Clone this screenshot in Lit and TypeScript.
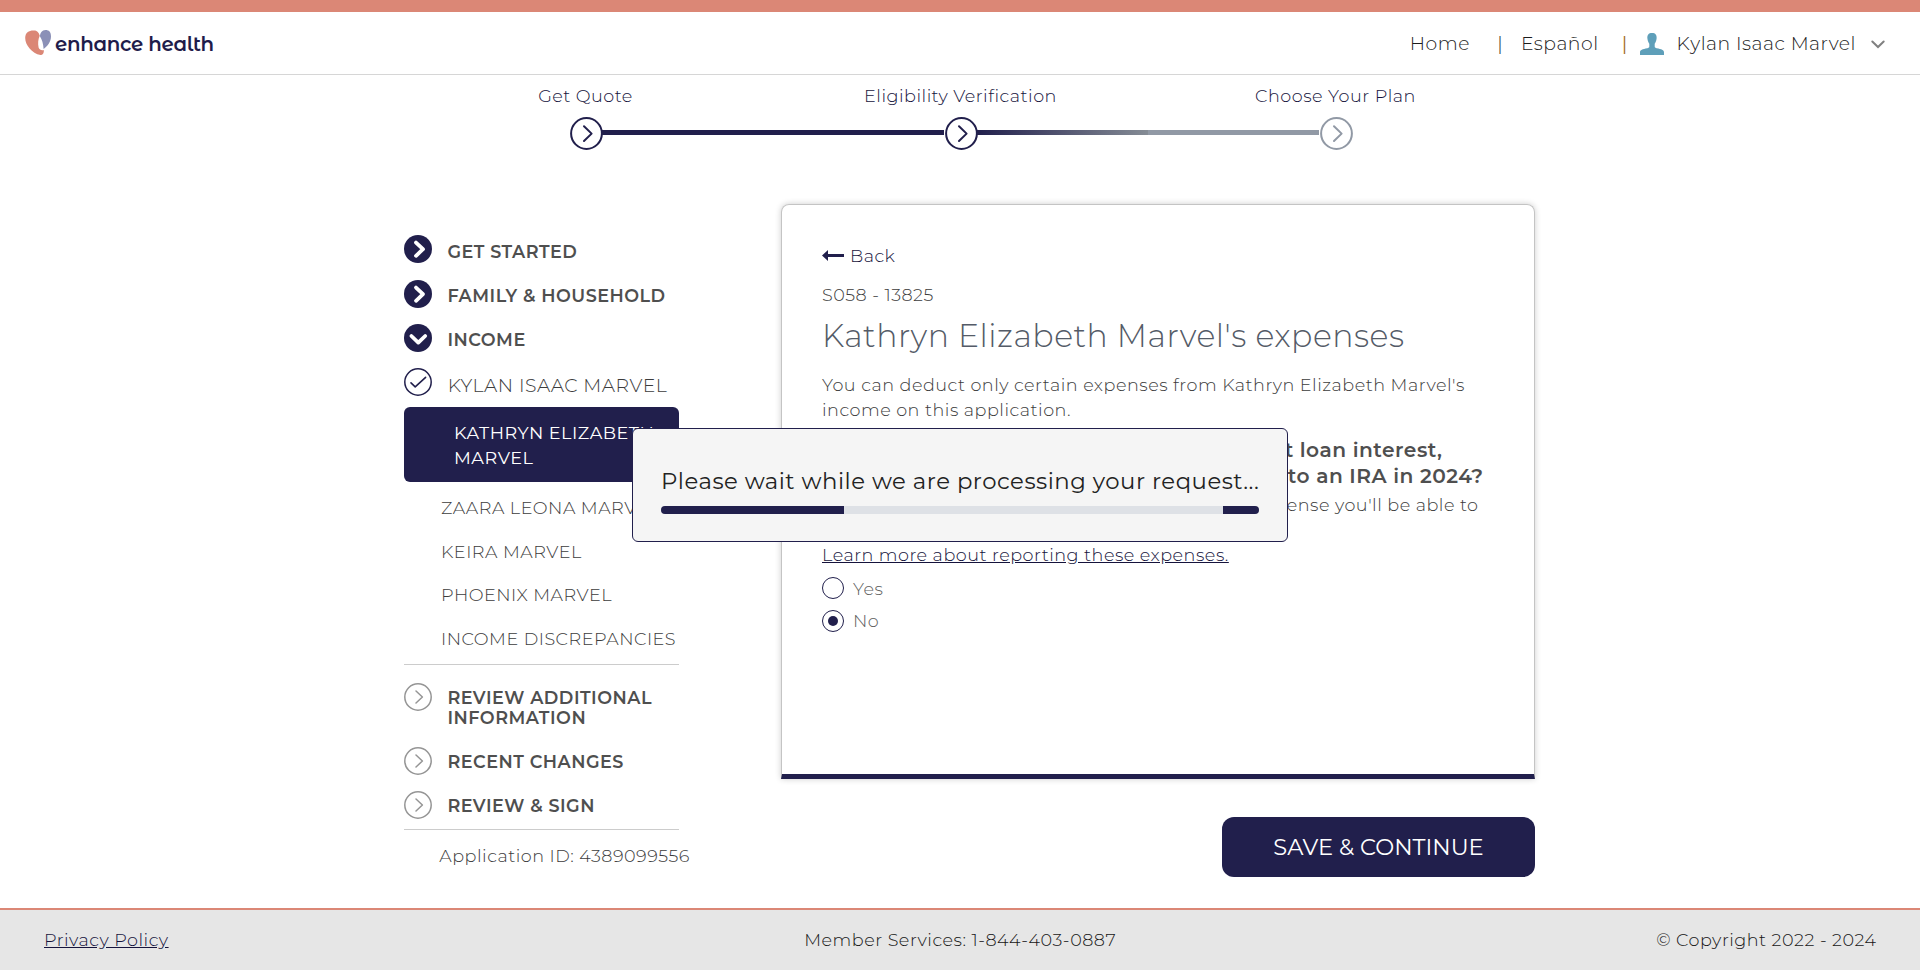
import { LitElement, html, css, svg } from 'lit';
import { customElement } from 'lit/decorators.js';

const glyphs = {
  solidRight: svg`<circle cx="14" cy="14" r="14" fill="#211f4c"/><path d="M12 7.6 19 14.2 12 20.8" fill="none" stroke="#fff" stroke-width="3.8" stroke-linecap="round" stroke-linejoin="round"/>`,
  solidDown: svg`<circle cx="14" cy="14" r="14" fill="#211f4c"/><path d="M7.4 12 14.3 18.6 21.2 12" fill="none" stroke="#fff" stroke-width="3.8" stroke-linecap="round" stroke-linejoin="round"/>`,
  check: svg`<circle cx="14" cy="14" r="13.2" fill="#fff" stroke="#211f4c" stroke-width="1.5"/><path d="M7 14.8 11.2 18.8 21.6 9.4" fill="none" stroke="#211f4c" stroke-width="1.6" stroke-linecap="round" stroke-linejoin="round"/>`,
  outline: svg`<circle cx="14" cy="14" r="13.2" fill="#fff" stroke="#959595" stroke-width="1.5"/><path d="M12 8 18.4 14 12 20" fill="none" stroke="#959595" stroke-width="1.5" stroke-linecap="round" stroke-linejoin="round"/>`,
};
type Glyph = keyof typeof glyphs;

const icon = (name: Glyph) => html`<svg class="icon" viewBox="0 0 28 28">${glyphs[name]}</svg>`;

const stepIcon = (color: string) => html`<svg class="step-icon" viewBox="0 0 33 33" fill="none" stroke=${color} stroke-width="2" stroke-linecap="round" stroke-linejoin="round">
  <circle cx="16.5" cy="16.5" r="15.4"/><path d="M14 9.2 21.6 16.6 14 24"/></svg>`;

@customElement('app-root')
export class AppRoot extends LitElement {
  static styles = css`
    :host {
      display: flex;
      flex-direction: column;
      height: 970px;
      box-sizing: border-box;
      background: #fff;
      color: #3c3c3c;
      font: 300 17.6px/25px Montserrat, "Liberation Sans", sans-serif;
      letter-spacing: 0.5px;
      overflow: hidden;
    }
    * { box-sizing: border-box; }
    svg { display: block; flex: none; overflow: visible; }
    a { color: #15133c; }

    .header {
      display: flex;
      align-items: center;
      height: 75px;
      flex: none;
      border-top: 12px solid #db8776;
      border-bottom: 1px solid #d6d6d6;
      padding: 0 35px 0 25px;
      color: #1c1c1c;
      font-size: 18.8px;
    }
    .logo {
      display: flex;
      gap: 4px;
      margin-right: auto;
      color: #1f1c4b;
      font: 600 19.8px/25px "Montserrat Alternates", Montserrat, sans-serif;
      letter-spacing: -0.33px;
    }
    .logo span { padding-top: 2px; }
    .heart { width: 26px; height: 25px; }
    .bar { width: 8px; text-align: center; letter-spacing: 0; }
    .bar.first { margin: 0 17px 0 26px; }
    .bar.second { margin: 0 11px 0 22px; color: #a36a1a; font-weight: 400; }
    .user { width: 24px; height: 22px; margin: 2px 13px 0 0; }
    .caret { width: 14px; height: 9px; margin: 3px 0 0 15px; }

    .stepper {
      display: grid;
      grid-template-columns: repeat(3, 375px);
      justify-content: start;
      padding: 8px 0 0 398px;
      color: #15133c;
      text-align: center;
      flex: none;
    }
    .rail { display: flex; margin-top: 9px; }
    .line { flex: 1; height: 5px; margin-top: 13px; }
    .line.done { background: #211f4c; }
    .line.fade { background: linear-gradient(90deg, #211f4c, #858c95); }
    .line.todo { background: #9199a5; }
    .step-icon { width: 33px; height: 33px; margin: 0 -0.5px 0 0.5px; }

    .body {
      display: flex;
      gap: 102px;
      height: 758px;
      padding: 54px 0 0 404px;
    }
    .side { width: 275px; padding-top: 31px; line-height: 20px; white-space: nowrap; flex: none; }
    .entry { display: flex; gap: 15.4px; height: 44px; }
    .entry .icon { width: 28px; height: 28px; }
    .entry span { padding-top: 6px; font-weight: 600; color: #4f4f4f; }
    .entry.top { height: 45px; }
    .entry.top span { padding-top: 7px; }
    .entry.done { height: 39px; }
    .entry.done span { padding-top: 8px; padding-left: 0.4px; font-size: 18.8px; font-weight: 300; color: #3c3c3c; }
    .entry.tall { height: 64px; }
    .entry.low span { padding-top: 5px; }
    .entry.last { height: 38px; }
    .current {
      height: 75px;
      border-radius: 6px;
      background: #211f4c;
      color: #fff;
      font-weight: 400;
      line-height: 25px;
      padding: 13px 0 0 50px;
      margin-bottom: 4px;
    }
    .child { height: 43.6px; line-height: 43.6px; padding-left: 37px; }
    .rule { height: 1px; background: #ccc; margin: 3.6px 0 18px; }
    .rule.end { margin: 0 0 16px; }
    .appid { padding-left: 35.3px; }

    .main { width: 754px; }
    .card {
      height: 575px;
      padding: 38px 40px 0;
      border: 1px solid #c4c4c4;
      border-bottom: 5px solid #211f4c;
      border-radius: 8px 8px 0 0;
      box-shadow: 0 0 6px rgba(0, 0, 0, 0.2);
      white-space: nowrap;
    }
    .back { display: flex; align-items: center; gap: 6px; color: #15133c; }
    .arrow { width: 22px; height: 11px; }
    .code { margin-top: 14px; }
    h1 { margin: 9px 0 17px; font: 300 31.55px/39px Montserrat, sans-serif; color: #545b67; }
    .question { margin-top: 15px; font-size: 20.2px; line-height: 26px; font-weight: 600; color: #4f4f4f; }
    .question div, .hint { text-align: right; }
    .question .one { width: 620.5px; }
    .question .two { width: 661.5px; }
    .hint { width: 656.5px; margin-top: 3px; }
    .more { margin-bottom: 10px; }
    .option { display: flex; gap: 9px; height: 23px; line-height: 23px; color: #606060; }
    .option + .option { margin-top: 9px; }
    .dot { width: 22px; height: 22px; border: 1.4px solid #211f4c; border-radius: 50%; display: grid; place-items: center; }
    .dot.on { margin-top: 0.5px; }
    .dot.on::after { content: ""; width: 10px; height: 10px; border-radius: 50%; background: #211f4c; }
    .save {
      display: block;
      width: 313px;
      height: 60px;
      margin: 38px 0 0 auto;
      padding: 0;
      border: 0;
      border-radius: 12px;
      background: #211f4c;
      color: #fff;
      font: 400 22.6px/60px Montserrat, sans-serif;
      letter-spacing: 0;
    }

    .footer {
      display: grid;
      grid-template-columns: 1fr auto 1fr;
      flex: none;
      height: 62px;
      margin-top: auto;
      padding: 0 43.5px 0 44px;
      border-top: 2px solid #db8776;
      background: #e6e6e6;
      color: #161616;
      line-height: 60px;
    }
    .copy { text-align: right; }

    .overlay { position: fixed; inset: 0; display: grid; place-items: center; }
    .modal {
      width: 656px;
      height: 114px;
      padding: 35px 28px 0;
      border: 1px solid #211f4c;
      border-radius: 6px;
      background: #f5f5f5;
      color: #222;
      font-size: 22.8px;
      font-weight: 400;
      line-height: 34px;
      white-space: nowrap;
    }
    .progress { display: flex; justify-content: space-between; height: 8px; margin-top: 8px; border-radius: 4px; background: #dee1e6; overflow: hidden; }
    .lead { width: 183px; background: #211f4c; }
    .tail { width: 36px; background: #211f4c; }
  `;

  private entry(name: Glyph, label: unknown, cls = '') {
    return html`<div class="entry ${cls}">${icon(name)}<span>${label}</span></div>`;
  }

  private step(label: string, color: string, left: string, right: string) {
    return html`<div>${label}<div class="rail"><div class="line ${left}"></div>${stepIcon(color)}<div class="line ${right}"></div></div></div>`;
  }

  render() {
    return html`
      <header class="header">
        <div class="logo">
          <svg class="heart" viewBox="0 0 26 25">
            <path fill="#db8776" d="M9 .5C4 .3.2 2.5.2 8 .2 15 7 23.5 15.5 25c2.7 0 3.5-2.2 3.3-5-2.3.5-4.3 0-5.2-2.5C12.8 14 13 9 14.8 5.8 13.5 2 12 .5 9 .5Z"/>
            <path fill="#8b90b7" d="M20.5 0C17 0 15 3 15 6.5c2 3 3.2 6.5 3.6 12.5C22 16.5 26 12 26 6.5 26 2 24 0 20.5 0Z"/>
          </svg>
          <span>enhance health</span>
        </div>
        <span>Home</span><span class="bar first">|</span><span>Español</span><span class="bar second">|</span>
        <svg class="user" viewBox="0 0 24 22"><path fill="#5e9fb9" d="M12 0c3.4 0 5 2 4.600 5.500-.3 2.500-1 4-1.900 5.200v2.800c0 1 .8 1.400 2 1.700C21.500 16 24 16.800 24 19.500V22H0v-2.500c0-2.700 2.500-3.500 7.300-4.300 1.200-.3 2-.7 2-1.700v-2.800c-.9-1.200-1.600-2.700-1.900-5.200C7 2 8.600 0 12 0Z"/></svg>
        <span>Kylan Isaac Marvel</span>
        <svg class="caret" viewBox="0 0 14 9"><path d="M1.300 1.500 7 7l5.700-5.500" fill="none" stroke="#808080" stroke-width="2" stroke-linecap="round"/></svg>
      </header>

      <nav class="stepper">
        ${this.step('Get Quote', '#211f4c', '', 'done')}
        ${this.step('Eligibility Verification', '#211f4c', 'done', 'fade')}
        ${this.step('Choose Your Plan', '#9199a5', 'todo', '')}
      </nav>

      <div class="body">
        <aside class="side">
          ${this.entry('solidRight', 'GET STARTED', 'top')}
          ${this.entry('solidRight', 'FAMILY & HOUSEHOLD')}
          ${this.entry('solidDown', 'INCOME')}
          ${this.entry('check', 'KYLAN ISAAC MARVEL', 'done')}
          <div class="current">KATHRYN ELIZABETH<br>MARVEL</div>
          ${['ZAARA LEONA MARVEL', 'KEIRA MARVEL', 'PHOENIX MARVEL', 'INCOME DISCREPANCIES'].map((n) => html`<div class="child">${n}</div>`)}
          <div class="rule"></div>
          ${this.entry('outline', html`REVIEW ADDITIONAL<br>INFORMATION`, 'low tall')}
          ${this.entry('outline', 'RECENT CHANGES', 'low')}
          ${this.entry('outline', 'REVIEW & SIGN', 'low last')}
          <div class="rule end"></div>
          <div class="appid">Application ID: 4389099556</div>
        </aside>

        <main class="main">
          <section class="card">
            <div class="back">
              <svg class="arrow" viewBox="0 0 22 11"><path fill="#211f4c" d="M0 5.500 6 0v4h16v3H6v4Z"/></svg>
              <span>Back</span>
            </div>
            <div class="code">S058 - 13825</div>
            <h1>Kathryn Elizabeth Marvel's expenses</h1>
            <div>You can deduct only certain expenses from Kathryn Elizabeth Marvel's<br>income on this application.</div>
            <div class="question">
              <div class="one">Does Kathryn Elizabeth Marvel pay student loan interest,</div>
              <div class="two">alimony, or make contributions to an IRA in 2024?</div>
            </div>
            <div class="hint">If Kathryn pays for this type of expense you'll be able to</div>
            <div>deduct it from income.</div>
            <div class="more"><a href="#">Learn more about reporting these expenses.</a></div>
            <div class="option"><i class="dot"></i>Yes</div>
            <div class="option"><i class="dot on"></i>No</div>
          </section>
          <button class="save">SAVE &amp; CONTINUE</button>
        </main>
      </div>

      <footer class="footer">
        <div><a href="#">Privacy Policy</a></div>
        <div>Member Services: 1-844-403-0887</div>
        <div class="copy">© Copyright 2022 - 2024</div>
      </footer>

      <div class="overlay">
        <div class="modal">
          Please wait while we are processing your request...
          <div class="progress"><div class="lead"></div><div class="tail"></div></div>
        </div>
      </div>
    `;
  }
}
